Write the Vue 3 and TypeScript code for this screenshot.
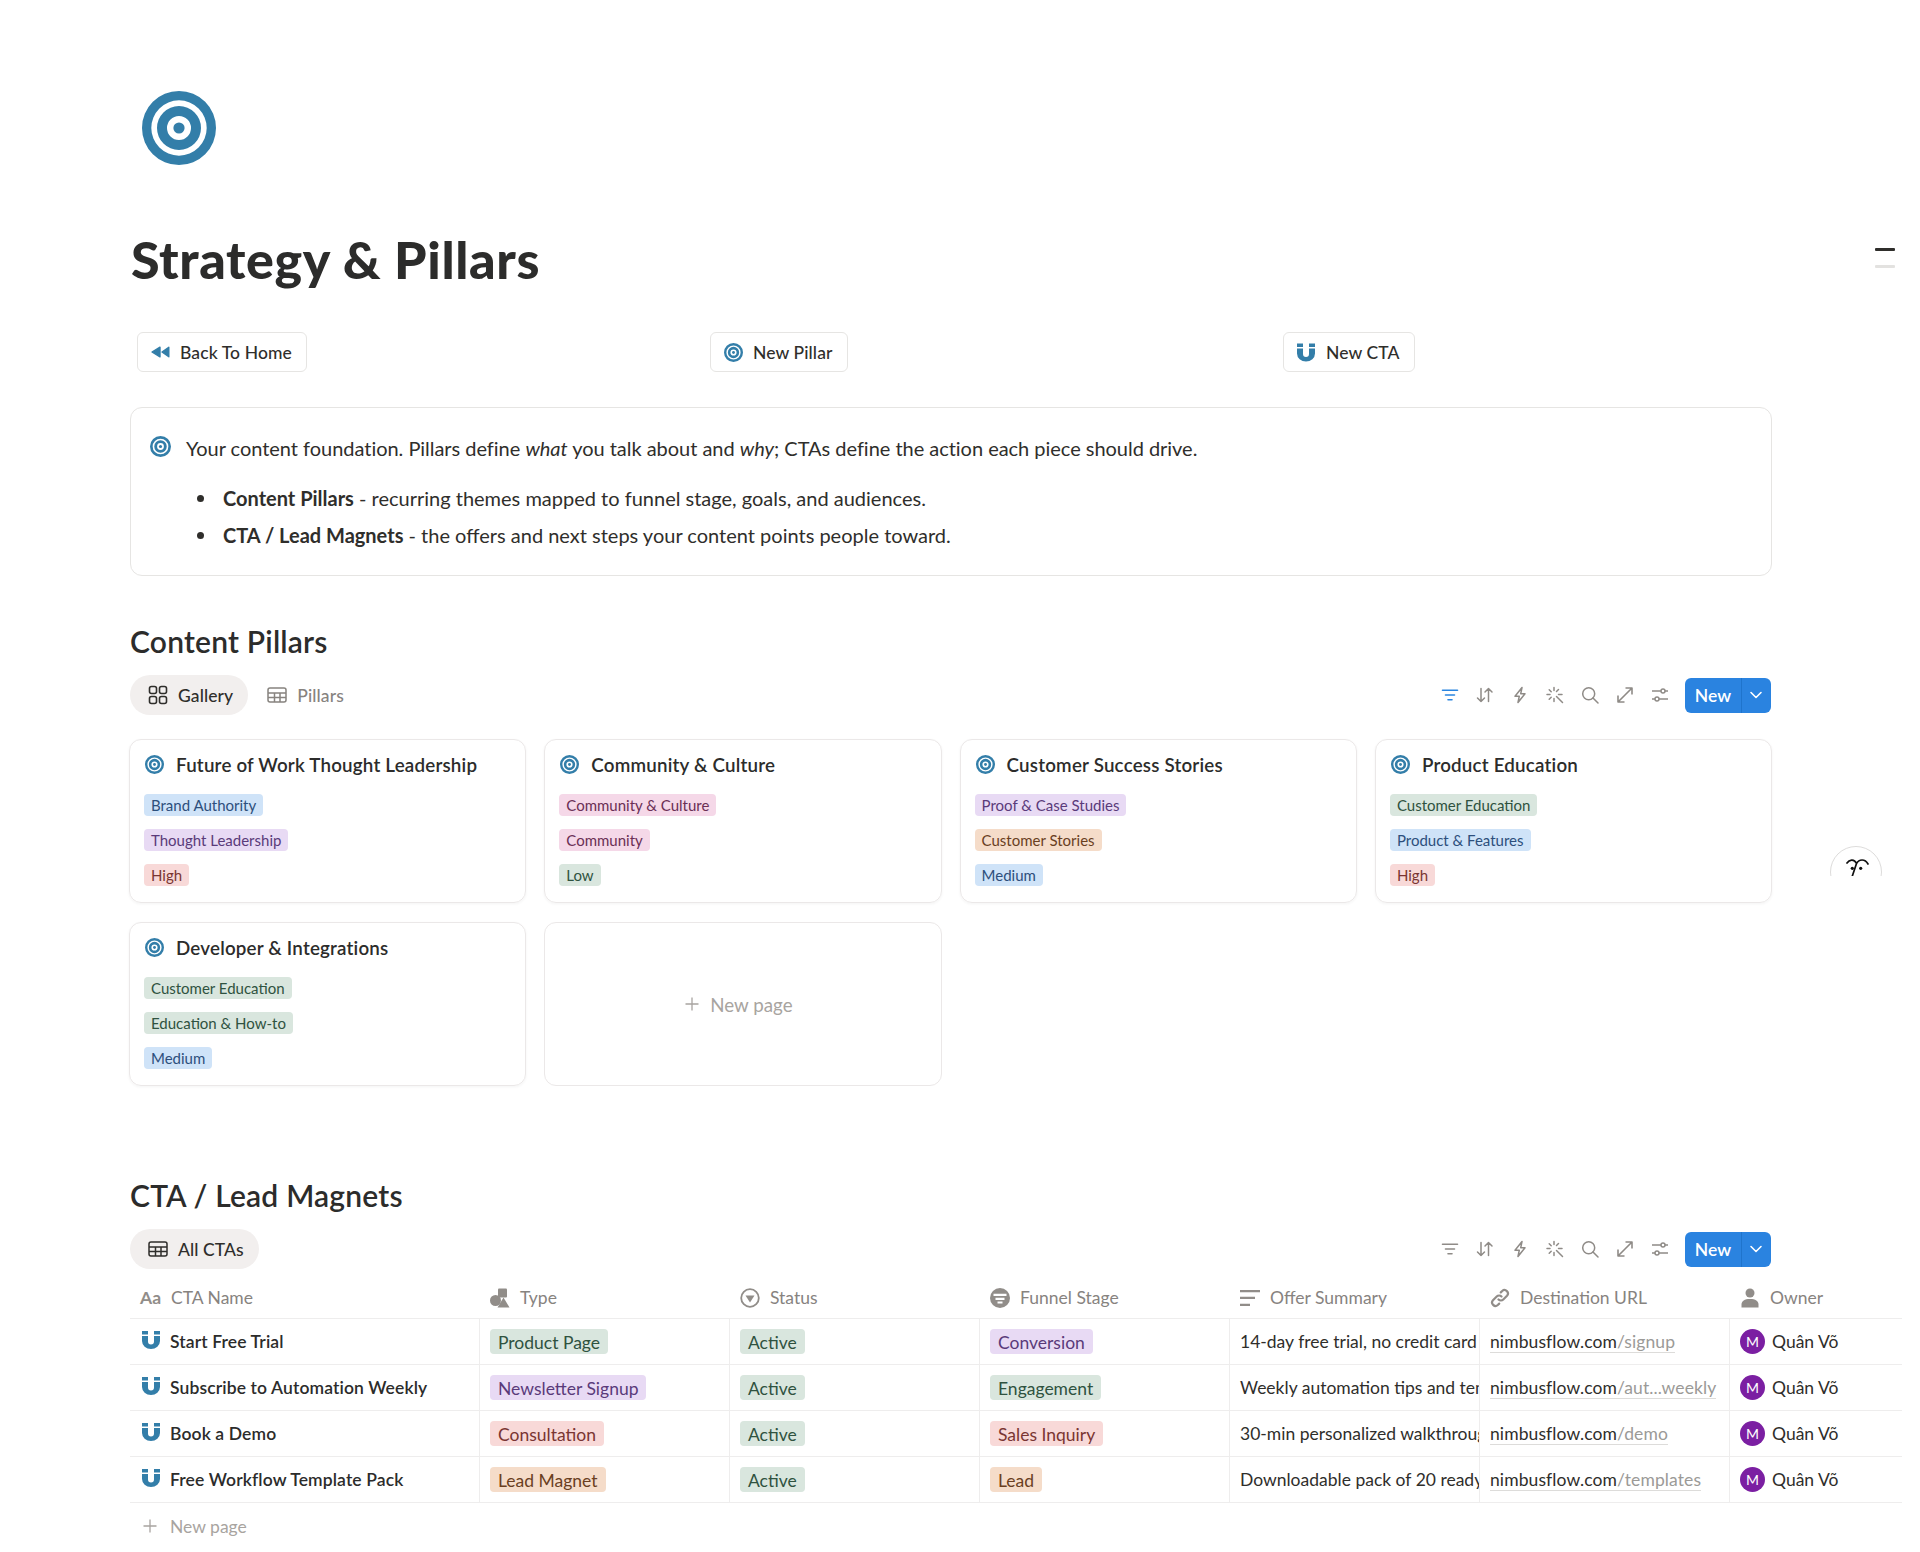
<template>
  <div class="page">
    <svg class="sprite" width="0" height="0">
      <symbol id="target" viewBox="0 0 74 74">
        <path fill="#337ea9" fill-rule="evenodd" d="M37 0a37 37 0 1 0 0 74a37 37 0 1 0 0-74zm0 9.3a27.7 27.7 0 1 1 0 55.4a27.7 27.7 0 1 1 0-55.4z" />
        <path fill="#337ea9" fill-rule="evenodd" d="M37 15a22 22 0 1 0 0 44a22 22 0 1 0 0-44zm0 10a12 12 0 1 1 0 24a12 12 0 1 1 0-24z" />
        <circle cx="37" cy="37" r="5.6" fill="#337ea9" />
      </symbol>
      <symbol id="magnet" viewBox="0 0 18 18">
        <path fill="#337ea9" d="M0 0h6v3.5H0zM12 0h6v3.5h-6zM0 5h6v5.5a3 3 0 0 0 6 0V5h6v5a9 8 0 0 1-18 0z" />
      </symbol>
      <symbol id="rewind" viewBox="0 0 19 12">
        <path fill="#337ea9" stroke="#337ea9" stroke-width="1.4" stroke-linejoin="round" d="M9 1.2L1 6l8 4.8zM17.8 1.2L11 6l6.8 4.8z" />
      </symbol>
      <symbol id="gallery" viewBox="0 0 20 20">
        <g fill="none" stroke="currentColor" stroke-width="1.6">
          <rect x="1.5" y="1.5" width="7" height="7" rx="2" />
          <rect x="11.5" y="1.5" width="7" height="7" rx="2" />
          <rect x="1.5" y="11.5" width="7" height="7" rx="2" />
          <rect x="11.5" y="11.5" width="7" height="7" rx="2" />
        </g>
      </symbol>
      <symbol id="table" viewBox="0 0 20 20">
        <g fill="none" stroke="currentColor" stroke-width="1.5">
          <rect x="1" y="3" width="18" height="14" rx="2" />
          <path d="M1 8h18M1 12.5h18M7.500 8v9M13 8v9" />
        </g>
      </symbol>
      <symbol id="plus" viewBox="0 0 14 14">
        <path fill="none" stroke="currentColor" stroke-width="1.3" d="M7 0.500v13M0.500 7h13" />
      </symbol>
      <symbol id="t-filter" viewBox="0 0 18 18">
        <path fill="none" stroke="currentColor" stroke-width="1.6" stroke-linecap="round" d="M1.500 4.200h15M4.500 9h9M7 13.800h4" />
      </symbol>
      <symbol id="t-sort" viewBox="0 0 18 18">
        <path fill="none" stroke="currentColor" stroke-width="1.5" stroke-linecap="round" stroke-linejoin="round" d="M5 2.500v13M1.500 12l3.500 3.500L8.500 12M12.500 15.500v-13M9 6l3.500-3.500L16 6" />
      </symbol>
      <symbol id="t-bolt" viewBox="0 0 18 18">
        <path fill="none" stroke="currentColor" stroke-width="1.5" stroke-linejoin="round" d="M11 1.500L4 10.200h4.300L7 16.500l7-8.700H9.700z" />
      </symbol>
      <symbol id="t-wand" viewBox="0 0 18 18">
        <path fill="none" stroke="currentColor" stroke-width="1.5" stroke-linecap="round" d="M8 1.500v3M8 12.500v3M1 8.500h3M12.500 8.500h3.500M3.200 3.700l2 2M12.500 3.500l-2 2M3.200 13.300l2-2M10.500 10.500l6 6" />
      </symbol>
      <symbol id="t-search" viewBox="0 0 18 18">
        <g fill="none" stroke="currentColor" stroke-width="1.5" stroke-linecap="round">
          <circle cx="7.700" cy="7.700" r="6" />
          <path d="M12 12l5 5" />
        </g>
      </symbol>
      <symbol id="t-expand" viewBox="0 0 18 18">
        <path fill="none" stroke="currentColor" stroke-width="1.6" stroke-linejoin="round" d="M2 16L16 2M9.500 2H16v6.500M2 9.500V16h6.500" />
      </symbol>
      <symbol id="t-sliders" viewBox="0 0 18 18">
        <g fill="none" stroke="currentColor" stroke-width="1.5">
          <path d="M1 5h9M14 5h3M1 13h3M8 13h9" />
          <circle cx="12" cy="5" r="2" />
          <circle cx="6" cy="13" r="2" />
        </g>
      </symbol>
      <symbol id="p-type" viewBox="0 0 20 20">
        <g fill="#918d89">
          <rect x="8" y="0.500" width="9" height="9" rx="1" />
          <circle cx="5.500" cy="12.500" r="5.500" />
          <path d="M13.500 9.500l6 10h-12z" />
        </g>
      </symbol>
      <symbol id="p-status" viewBox="0 0 20 20">
        <circle cx="10" cy="10" r="8.800" fill="none" stroke="#918d89" stroke-width="1.800" />
        <path fill="#918d89" d="M5.500 7.500h9L10 14.500z" />
      </symbol>
      <symbol id="p-funnel" viewBox="0 0 20 20">
        <circle cx="10" cy="10" r="10" fill="#918d89" />
        <path fill="#fff" d="M3.500 5.800h13v2.200h-13zM5.500 9.800h9v2.200h-9zM7.500 13.500h5v2h-5z" />
      </symbol>
      <symbol id="p-lines" viewBox="0 0 20 20">
        <path fill="#918d89" d="M0 2h20v2.300H0zM0 8.800h15v2.300H0zM0 15.700h10V18H0z" />
      </symbol>
      <symbol id="p-link" viewBox="0 0 20 20">
        <path fill="none" stroke="#918d89" stroke-width="2.200" stroke-linecap="round" d="M8.500 11.500a3.400 3.400 0 0 0 4.800 0l3.700-3.700a3.400 3.400 0 0 0-4.800-4.800l-1.400 1.400M11.500 8.500a3.400 3.400 0 0 0-4.800 0L3 12.200A3.400 3.400 0 0 0 7.800 17l1.400-1.400" />
      </symbol>
      <symbol id="p-person" viewBox="0 0 20 20">
        <circle cx="10" cy="5" r="4.500" fill="#918d89" />
        <path fill="#918d89" d="M1.500 19.500v-3c0-3.500 3-5.500 8.500-5.500s8.500 2 8.500 5.500v3z" />
      </symbol>
    </svg>

    <svg class="page-icon"><use href="#target" /></svg>
    <h1 class="title">Strategy &amp; Pillars</h1>

    <div class="actions">
      <div class="action-col">
        <button class="action-btn"><svg class="ic-rewind"><use href="#rewind" /></svg>Back To Home</button>
      </div>
      <div class="action-col">
        <button class="action-btn"><svg class="ic-btn"><use href="#target" /></svg>New Pillar</button>
      </div>
      <div class="action-col">
        <button class="action-btn"><svg class="ic-btn-m"><use href="#magnet" /></svg>New CTA</button>
      </div>
    </div>

    <div class="callout">
      <svg class="callout-icon"><use href="#target" /></svg>
      <div class="callout-body">
        <p>Your content foundation. Pillars define <em>what</em> you talk about and <em>why</em>; CTAs define the action each piece should drive.</p>
        <ul>
          <li><b>Content Pillars</b> - recurring themes mapped to funnel stage, goals, and audiences.</li>
          <li><b>CTA / Lead Magnets</b> - the offers and next steps your content points people toward.</li>
        </ul>
      </div>
    </div>

    <h2 class="h2 h2-first">Content Pillars</h2>
    <div class="db-bar">
      <div class="tabs">
        <div class="tab is-active"><svg class="tab-icon"><use href="#gallery" /></svg>Gallery</div>
        <div class="tab"><svg class="tab-icon"><use href="#table" /></svg>Pillars</div>
      </div>
      <div class="tools">
        <svg
          v-for="(t, i) in tools"
          :key="t"
          class="tool"
          :class="{ 'is-on': i === 0 }"
        ><use :href="'#' + t" /></svg>
        <div class="new-btn"><span class="new-label">New</span><span class="new-arrow"><svg width="14" height="14" viewBox="0 0 14 14"><path d="M2 4.500l5 5 5-5" fill="none" stroke="#fff" stroke-width="1.600" stroke-linecap="round" stroke-linejoin="round" /></svg></span></div>
      </div>
    </div>

    <div class="gallery">
      <div v-for="card in cards" :key="card.name" class="card">
        <div class="card-head"><svg class="card-icon"><use href="#target" /></svg>{{ card.name }}</div>
        <div class="card-tags">
          <span v-for="tag in card.tags" :key="tag[0]" class="tag" :class="'c-' + tag[1]">{{ tag[0] }}</span>
        </div>
      </div>
      <div class="card card-new"><svg class="plus"><use href="#plus" /></svg>New page</div>
    </div>

    <h2 class="h2 h2-second">CTA / Lead Magnets</h2>
    <div class="db-bar">
      <div class="tabs">
        <div class="tab is-active"><svg class="tab-icon"><use href="#table" /></svg>All CTAs</div>
      </div>
      <div class="tools">
        <svg v-for="t in tools" :key="t" class="tool"><use :href="'#' + t" /></svg>
        <div class="new-btn"><span class="new-label">New</span><span class="new-arrow"><svg width="14" height="14" viewBox="0 0 14 14"><path d="M2 4.500l5 5 5-5" fill="none" stroke="#fff" stroke-width="1.600" stroke-linecap="round" stroke-linejoin="round" /></svg></span></div>
      </div>
    </div>

    <div class="table">
      <div class="tr th">
        <div class="td"><span class="aa">Aa</span>CTA Name</div>
        <div class="td"><svg class="th-icon"><use href="#p-type" /></svg>Type</div>
        <div class="td"><svg class="th-icon"><use href="#p-status" /></svg>Status</div>
        <div class="td"><svg class="th-icon"><use href="#p-funnel" /></svg>Funnel Stage</div>
        <div class="td"><svg class="th-icon"><use href="#p-lines" /></svg>Offer Summary</div>
        <div class="td"><svg class="th-icon"><use href="#p-link" /></svg>Destination URL</div>
        <div class="td"><svg class="th-icon"><use href="#p-person" /></svg>Owner</div>
      </div>
      <div v-for="row in rows" :key="row.name" class="tr">
        <div class="td td-name"><svg class="row-icon"><use href="#magnet" /></svg>{{ row.name }}</div>
        <div class="td"><span class="pill" :class="'c-' + row.type[1]">{{ row.type[0] }}</span></div>
        <div class="td"><span class="pill c-green">Active</span></div>
        <div class="td"><span class="pill" :class="'c-' + row.stage[1]">{{ row.stage[0] }}</span></div>
        <div class="td td-clip">{{ row.summary }}</div>
        <div class="td"><span class="url">nimbusflow.com<span class="url-path">{{ row.path }}</span></span></div>
        <div class="td"><span class="avatar">M</span>Quân Võ</div>
      </div>
      <div class="add-row"><svg class="plus"><use href="#plus" /></svg>New page</div>
    </div>

    <div class="toc"><i class="toc-dark"></i><i class="toc-light"></i></div>
    <div class="ai-wrap">
      <div class="ai-circle">
        <svg width="24" height="24" viewBox="0 0 24 24"><path fill="none" stroke="#111" stroke-width="1.700" stroke-linecap="round" d="M1 6C3 3 8 1 10.500 6.500L6 20M10.500 6.500C13 2 19 1.500 22 7" /><circle cx="6.300" cy="11.300" r="1.600" fill="#111" /><circle cx="14.700" cy="11.300" r="1.600" fill="#111" /></svg>
      </div>
    </div>
  </div>
</template>

<script setup lang="ts">
type Colored = [string, string];

interface PillarCard {
  name: string;
  tags: Colored[];
}

interface CtaRow {
  name: string;
  type: Colored;
  stage: Colored;
  summary: string;
  path: string;
}

const tools = ['t-filter', 't-sort', 't-bolt', 't-wand', 't-search', 't-expand', 't-sliders'];

const cards: PillarCard[] = [
  { name: 'Future of Work Thought Leadership', tags: [['Brand Authority', 'blue'], ['Thought Leadership', 'purple'], ['High', 'red']] },
  { name: 'Community & Culture', tags: [['Community & Culture', 'pink'], ['Community', 'pink'], ['Low', 'green']] },
  { name: 'Customer Success Stories', tags: [['Proof & Case Studies', 'purple'], ['Customer Stories', 'orange'], ['Medium', 'blue']] },
  { name: 'Product Education', tags: [['Customer Education', 'green'], ['Product & Features', 'blue'], ['High', 'red']] },
  { name: 'Developer & Integrations', tags: [['Customer Education', 'green'], ['Education & How-to', 'green'], ['Medium', 'blue']] },
];

const rows: CtaRow[] = [
  { name: 'Start Free Trial', type: ['Product Page', 'green'], stage: ['Conversion', 'purple'], summary: '14-day free trial, no credit card required', path: '/signup' },
  { name: 'Subscribe to Automation Weekly', type: ['Newsletter Signup', 'purple'], stage: ['Engagement', 'green'], summary: 'Weekly automation tips and templates', path: '/aut...weekly' },
  { name: 'Book a Demo', type: ['Consultation', 'red'], stage: ['Sales Inquiry', 'red'], summary: '30-min personalized walkthrough', path: '/demo' },
  { name: 'Free Workflow Template Pack', type: ['Lead Magnet', 'orange'], stage: ['Lead', 'orange'], summary: 'Downloadable pack of 20 ready-to-use templates', path: '/templates' },
];
</script>

<style>
html, body {
  margin: 0;
  background: #fff;
}
</style>

<style scoped>
.page {
  position: relative;
  width: 1920px;
  height: 1552px;
  overflow: hidden;
  box-sizing: border-box;
  padding: 91px 0 0 130px;
  font-family: "Lato", "Noto Sans", sans-serif;
  color: #2f2e2b;
  background: #fff;
}

.sprite {
  position: absolute;
}

.page-icon {
  display: block;
  width: 74px;
  height: 74px;
  margin-left: 12px;
}

.title {
  margin: 64px 0 0 1px;
  font-size: 52px;
  line-height: 60px;
  font-weight: 900;
  letter-spacing: 0.6px;
  color: #2c2c2b;
}

.actions {
  display: grid;
  grid-template-columns: repeat(3, 573px);
  margin-top: 43px;
  padding-left: 7px;
}

.action-btn {
  display: inline-flex;
  align-items: center;
  height: 40px;
  box-sizing: border-box;
  padding: 0 14px 0 13px;
  border: 1px solid #e6e5e3;
  border-radius: 6px;
  background: #fff;
  font: 500 17.500px "Lato", sans-serif;
  letter-spacing: 0.1px;
  color: #2f2e2b;
}

.ic-rewind {
  width: 19px;
  height: 12px;
  margin-right: 10px;
}

.ic-btn {
  width: 19px;
  height: 19px;
  margin-right: 10px;
}

.ic-btn-m {
  width: 18px;
  height: 19px;
  margin-right: 11px;
}

.callout {
  display: flex;
  width: 1642px;
  height: 169px;
  box-sizing: border-box;
  margin-top: 35px;
  padding: 26px 20px 0 19px;
  border: 1px solid #e6e5e3;
  border-radius: 12px;
  font-size: 20px;
}

.callout-icon {
  width: 21px;
  height: 21px;
  flex-shrink: 0;
  margin: 2px 15px 0 0;
}

.callout-body p {
  margin: 0;
  line-height: 28px;
  letter-spacing: -0.03px;
}

.callout-body ul {
  margin: 22px 0 0;
  padding-left: 37px;
  list-style: none;
}

.callout-body li {
  position: relative;
  line-height: 28px;
  margin-bottom: 9px;
}

.callout-body li::before {
  content: "";
  position: absolute;
  left: -26px;
  top: 11px;
  width: 7px;
  height: 7px;
  border-radius: 50%;
  background: #2f2e2b;
}

.callout-body b {
  font-weight: 700;
}

.h2 {
  margin: 0;
  font-size: 30px;
  line-height: 40px;
  font-weight: 600;
  letter-spacing: 0.2px;
  color: #2c2c2b;
}

.h2-first {
  margin-top: 45px;
}

.h2-second {
  margin-top: 89px;
}

.db-bar {
  display: flex;
  align-items: center;
  justify-content: space-between;
  width: 1641px;
  height: 40px;
  margin-top: 14px;
}

.tabs {
  display: flex;
  align-items: center;
  gap: 1px;
}

.tab {
  display: flex;
  align-items: center;
  height: 40px;
  padding: 0 15px 0 18px;
  border-radius: 20px;
  font-size: 17.500px;
  font-weight: 500;
  letter-spacing: 0.1px;
  color: #87837f;
}

.tab.is-active {
  background: #f2efee;
  color: #2f2e2b;
}

.tab-icon {
  width: 20px;
  height: 20px;
  margin-right: 10px;
}

.tools {
  display: flex;
  align-items: center;
}

.tool {
  width: 18px;
  height: 18px;
  margin-right: 17px;
  color: #8f8b87;
}

.tool.is-on {
  color: #2a85e0;
}

.new-btn {
  display: flex;
  height: 35px;
  border-radius: 6px;
  margin-left: -1px;
  background: #2a83e0;
  color: #fff;
  font-size: 17.500px;
  font-weight: 600;
}

.new-label {
  display: flex;
  align-items: center;
  justify-content: center;
  width: 56px;
}

.new-arrow {
  display: flex;
  align-items: center;
  justify-content: center;
  width: 30px;
  padding-right: 2px;
  border-left: 1px solid #1f74cc;
  box-sizing: border-box;
}

.gallery {
  display: grid;
  grid-template-columns: repeat(4, 397.300px);
  grid-auto-rows: 164px;
  gap: 19px 18px;
  margin: 24px 0 0 -1px;
}

.card {
  box-sizing: border-box;
  padding: 12px 14px 0;
  border: 1px solid #ebe8e8;
  border-radius: 12px;
  box-shadow: 0 1px 3px rgba(40, 30, 30, 0.05);
}

.card-head {
  display: flex;
  align-items: center;
  height: 24px;
  padding-left: 1px;
  font-size: 18.750px;
  font-weight: 600;
  letter-spacing: 0.2px;
  color: #2c2c2b;
}

.card-icon {
  width: 19px;
  height: 19px;
  margin-right: 12px;
}

.card-tags {
  display: flex;
  flex-direction: column;
  align-items: flex-start;
  gap: 13px;
  margin-top: 18px;
}

.tag {
  height: 22px;
  padding: 0 7px;
  border-radius: 4px;
  font-size: 15px;
  line-height: 22px;
}

.card-new {
  display: flex;
  align-items: center;
  justify-content: center;
  padding: 0 8px 0 0;
  font-size: 18.750px;
  color: #a8a4a0;
  box-shadow: none;
}

.plus {
  width: 14px;
  height: 14px;
  margin-right: 11px;
}

.c-blue { background: #cfe3f8; color: #2d4f7c; }
.c-purple { background: #e8daf4; color: #5a3a7a; }
.c-red { background: #f8d9d8; color: #7a3532; }
.c-green { background: #d9e6de; color: #2f5240; }
.c-pink { background: #f5d8e8; color: #6b2f55; }
.c-orange { background: #f5dcc9; color: #6a3f1f; }

.table {
  width: 1772px;
}

.tr {
  display: grid;
  grid-template-columns: 350px repeat(5, 250px) 1fr;
  height: 46px;
  box-sizing: border-box;
  border-bottom: 1.500px solid #eeeded;
}

.td {
  display: flex;
  align-items: center;
  padding-left: 10px;
  border-right: 1.500px solid #eeeded;
  font-size: 17.500px;
  white-space: nowrap;
  overflow: hidden;
  min-width: 0;
}

.td:last-child {
  border-right: 0;
}

.th {
  height: 50px;
  padding-top: 8px;
}

.th .td {
  border-right: 0;
  color: #87837f;
}

.aa {
  width: 24px;
  margin-right: 7px;
  font-weight: 700;
  color: #918d89;
}

.th-icon {
  width: 20px;
  height: 20px;
  margin-right: 10px;
}

.td-name {
  font-weight: 600;
  letter-spacing: 0.12px;
  color: #2c2c2b;
}

.row-icon {
  width: 18px;
  height: 18px;
  margin: 0 10px 3px 2px;
}

.pill {
  height: 25px;
  padding: 0 8px;
  border-radius: 4px;
  line-height: 27px;
}

.url {
  border-bottom: 1px solid #dddcda;
  line-height: 21px;
  letter-spacing: 0.1px;
}

.url-path {
  color: #9b9a97;
}

.avatar {
  display: flex;
  align-items: center;
  justify-content: center;
  width: 25px;
  height: 25px;
  margin-right: 7px;
  border-radius: 50%;
  background: #7b1fa2;
  color: #fff;
  font-size: 14px;
}

.add-row {
  display: flex;
  align-items: center;
  height: 46px;
  padding-left: 13px;
  font-size: 17.500px;
  color: #a8a4a0;
}

.add-row .plus {
  margin-right: 13px;
}

/* outline marks on the right edge */
.toc {
  position: absolute;
  top: 248px;
  left: 1875px;
  display: flex;
  flex-direction: column;
  gap: 14px;
}

.toc-dark,
.toc-light {
  display: block;
  width: 20px;
  height: 3px;
  border-radius: 1px;
  background: #2f2e2b;
}

.toc-light {
  background: #e3e2e0;
}

/* help bubble, cut off by its own wrapper */
.ai-wrap {
  position: absolute;
  top: 846px;
  left: 1826px;
  width: 60px;
  height: 30px;
  overflow: hidden;
}

.ai-circle {
  display: flex;
  justify-content: center;
  box-sizing: border-box;
  width: 52px;
  height: 52px;
  margin-left: 4px;
  padding: 10px 0 0 4px;
  border: 1px solid #dddcdb;
  border-radius: 50%;
  background: #fff;
}
</style>
